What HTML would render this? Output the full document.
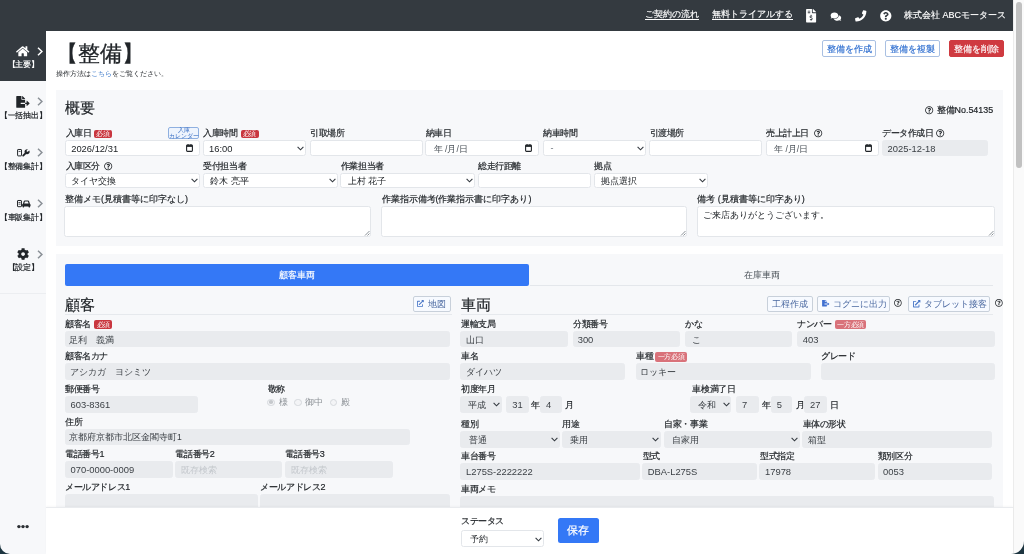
<!DOCTYPE html>
<html><head><meta charset="utf-8">
<style>
*{box-sizing:border-box}
html,body{margin:0;padding:0}
body{-webkit-font-smoothing:antialiased;will-change:transform;width:1024px;height:554px;overflow:hidden;position:relative;background:#fff;font-family:"Liberation Sans",sans-serif;color:#212529}
.a{position:absolute}
svg{overflow:visible}
.hdr{left:0;top:0;width:1013px;height:31px;background:#343a40}
.hl{-webkit-text-stroke:0.15px #fff;color:#fff;font-size:9px;line-height:1;text-decoration:underline;text-underline-offset:1.6px;white-space:nowrap}
.sb{left:0;top:31px;width:46px;height:523px;background:#f7f8fa}
.lb{position:absolute;font-size:8.7px;line-height:1;white-space:nowrap;color:#212529;-webkit-text-stroke:0.18px #212529}
.in{position:absolute;background:#fff;border:1px solid #e3e6ea;border-radius:2.5px;font-size:9px;line-height:1;color:#212529;white-space:nowrap;overflow:hidden}
.ro{background:#e9ebee;border-color:#e9ebee;color:#3a3f44}
.card{background:#f7f8fa}
.badge{position:absolute;background:#c9363f;color:#fff;border-radius:2px;font-size:7px;line-height:1;text-align:center;white-space:nowrap;letter-spacing:-0.3px}
.chev{position:absolute;width:5px;height:5px;border-right:1px solid #495057;border-bottom:1px solid #495057;transform:rotate(45deg)}
.btn{position:absolute;border:1px solid #a9c0e2;border-radius:2px;background:#fff;color:#2f6fd0;-webkit-text-stroke:0.15px currentColor;font-size:8.6px;line-height:1;text-align:center;white-space:nowrap}
</style></head><body>
<!-- header -->
<div class="a hdr"></div>
<div class="a hl" style="left:645px;top:10.2px">ご契約の流れ</div>
<div class="a hl" style="left:712px;top:10.2px">無料トライアルする</div>
<div class="a" style="left:904px;top:11px;color:#fff;-webkit-text-stroke:0.15px #fff;font-size:9px;line-height:1;white-space:nowrap">株式会社 ABCモータース</div>

<!-- sidebar -->
<div class="a sb"></div>
<div class="a" style="left:0;top:31px;width:46px;height:50px;background:#343a40"></div>

<!-- scrollbar -->
<div class="a" style="left:1013px;top:0;width:11px;height:554px;background:#fafafa;border-left:1px solid #ececec"></div>
<div class="a" style="left:1016px;top:2px;width:6px;height:166px;background:#c1c1c1;border-radius:3px"></div>

<!-- title -->
<div class="a" style="left:56px;top:43px;font-size:22px;line-height:1;-webkit-text-stroke:0.3px #212529;white-space:nowrap">【整備】</div>
<div class="a" style="left:56px;top:70px;font-size:7px;line-height:1;white-space:nowrap">操作方法は<span style="color:#3a78c9">こちら</span>をご覧ください。</div>
<div class="btn" style="left:822px;top:40px;width:54px;height:16.5px;padding-top:3.5px">整備を作成</div>
<div class="btn" style="left:885px;top:40px;width:55px;height:16.5px;padding-top:3.5px">整備を複製</div>
<div class="btn" style="left:949px;top:40px;width:54.5px;height:16.5px;padding-top:3.5px;background:#cf3a40;border-color:#cf3a40;color:#fff">整備を削除</div>

<!-- card 1 -->
<div class="a card" style="left:56px;top:89.5px;width:947px;height:156px"></div>
<div class="a" style="left:64.5px;top:100px;font-size:15px;line-height:1;-webkit-text-stroke:0.2px #212529;white-space:nowrap">概要</div>
<div class="a" style="left:936.6px;top:106px;font-size:8.9px;-webkit-text-stroke:0.2px #212529;line-height:1;white-space:nowrap">整備No.54135</div>


<div class="lb" style="left:65.5px;top:128.6px;font-size:9px;letter-spacing:-0.4px;">入庫日</div>
<div class="lb" style="left:203.3px;top:128.6px;font-size:9px;letter-spacing:-0.4px;">入庫時間</div>
<div class="lb" style="left:310.1px;top:128.6px;font-size:9px;letter-spacing:-0.4px;">引取場所</div>
<div class="lb" style="left:425.7px;top:128.6px;font-size:9px;letter-spacing:-0.4px;">納車日</div>
<div class="lb" style="left:543.0px;top:128.6px;font-size:9px;letter-spacing:-0.4px;">納車時間</div>
<div class="lb" style="left:649.5px;top:128.6px;font-size:9px;letter-spacing:-0.4px;">引渡場所</div>
<div class="lb" style="left:766.0px;top:128.6px;font-size:9px;letter-spacing:-0.4px;">売上計上日</div>
<div class="lb" style="left:882.1px;top:128.6px;font-size:9px;letter-spacing:-0.4px;">データ作成日</div>
<div class="badge" style="left:94px;top:129.6px;width:18.40px;height:8.70px;background:#c9363f;padding-top:0.85px">必須</div>
<div class="badge" style="left:240.5px;top:129.6px;width:18.00px;height:8.70px;background:#c9363f;padding-top:0.85px">必須</div>
<div class="a" style="left:168.4px;top:126.5px;width:31px;height:12.9px;border:1px solid #8fb0e0;background:#eef4fd;border-radius:2px"></div>
<div class="a" style="left:168.4px;top:126.6px;width:31px;font-size:6px;line-height:6px;letter-spacing:-0.2px;color:#3a6fc4;text-align:center;white-space:nowrap">入庫<br>カレンダー</div>
<svg class="a" style="left:813.6px;top:128.6px" width="8.4" height="8.4" viewBox="0 0 512 512"><path fill="#212529" d="M256 8C119.043 8 8 119.083 8 256c0 136.997 111.043 248 248 248s248-111.003 248-248C504 119.083 392.957 8 256 8zm0 448c-110.532 0-200-89.431-200-200 0-110.495 89.472-200 200-200 110.491 0 200 89.471 200 200 0 110.53-89.431 200-200 200zm107.244-255.2c0 67.052-72.421 68.084-72.421 92.863V300c0 6.627-5.373 12-12 12h-45.647c-6.627 0-12-5.373-12-12v-8.659c0-35.745 27.1-50.034 47.579-61.516 17.561-9.845 28.324-16.541 28.324-29.579 0-17.246-21.999-28.693-39.784-28.693-23.189 0-33.894 10.977-48.942 29.969-4.057 5.12-11.46 6.071-16.666 2.124l-27.824-21.098c-5.107-3.872-6.251-11.066-2.644-16.363C184.846 131.491 214.94 112 261.794 112c49.071 0 101.45 38.304 101.45 88.8zM298 368c0 23.159-18.841 42-42 42s-42-18.841-42-42 18.841-42 42-42 42 18.841 42 42z"/></svg>
<svg class="a" style="left:935.8px;top:128.6px" width="8.4" height="8.4" viewBox="0 0 512 512"><path fill="#212529" d="M256 8C119.043 8 8 119.083 8 256c0 136.997 111.043 248 248 248s248-111.003 248-248C504 119.083 392.957 8 256 8zm0 448c-110.532 0-200-89.431-200-200 0-110.495 89.472-200 200-200 110.491 0 200 89.471 200 200 0 110.53-89.431 200-200 200zm107.244-255.2c0 67.052-72.421 68.084-72.421 92.863V300c0 6.627-5.373 12-12 12h-45.647c-6.627 0-12-5.373-12-12v-8.659c0-35.745 27.1-50.034 47.579-61.516 17.561-9.845 28.324-16.541 28.324-29.579 0-17.246-21.999-28.693-39.784-28.693-23.189 0-33.894 10.977-48.942 29.969-4.057 5.12-11.46 6.071-16.666 2.124l-27.824-21.098c-5.107-3.872-6.251-11.066-2.644-16.363C184.846 131.491 214.94 112 261.794 112c49.071 0 101.45 38.304 101.45 88.8zM298 368c0 23.159-18.841 42-42 42s-42-18.841-42-42 18.841-42 42-42 42 18.841 42 42z"/></svg>
<svg class="a" style="left:925px;top:106.3px" width="8.4" height="8.4" viewBox="0 0 512 512"><path fill="#212529" d="M256 8C119.043 8 8 119.083 8 256c0 136.997 111.043 248 248 248s248-111.003 248-248C504 119.083 392.957 8 256 8zm0 448c-110.532 0-200-89.431-200-200 0-110.495 89.472-200 200-200 110.491 0 200 89.471 200 200 0 110.53-89.431 200-200 200zm107.244-255.2c0 67.052-72.421 68.084-72.421 92.863V300c0 6.627-5.373 12-12 12h-45.647c-6.627 0-12-5.373-12-12v-8.659c0-35.745 27.1-50.034 47.579-61.516 17.561-9.845 28.324-16.541 28.324-29.579 0-17.246-21.999-28.693-39.784-28.693-23.189 0-33.894 10.977-48.942 29.969-4.057 5.12-11.46 6.071-16.666 2.124l-27.824-21.098c-5.107-3.872-6.251-11.066-2.644-16.363C184.846 131.491 214.94 112 261.794 112c49.071 0 101.45 38.304 101.45 88.8zM298 368c0 23.159-18.841 42-42 42s-42-18.841-42-42 18.841-42 42-42 42 18.841 42 42z"/></svg>
<div class="in" style="left:65px;top:140.2px;width:134.50px;height:16.10px;"><span style="position:absolute;left:5.2px;top:2.45px;font-size:9.4px;">2026/12/31</span></div>
<svg class="a" style="left:186.2px;top:144px" width="7" height="8" viewBox="0 0 7 8"><rect x="0.6" y="1.1" width="5.8" height="6.3" rx="0.8" fill="none" stroke="#212529" stroke-width="1.1"/><rect x="0.6" y="1.1" width="5.8" height="1.8" fill="#212529"/><rect x="1.6" y="0" width="0.9" height="1.5" fill="#212529"/><rect x="4.5" y="0" width="0.9" height="1.5" fill="#212529"/></svg>
<div class="in" style="left:202.8px;top:140.2px;width:103.50px;height:16.10px;"><span style="position:absolute;left:5.2px;top:2.45px;font-size:9.4px;">16:00</span></div>
<svg class="a" style="left:297.3px;top:146.05px" width="7" height="5" viewBox="0 0 7 5"><path d="M0.6 0.8 L3.5 3.8 L6.4 0.8" fill="none" stroke="#343a40" stroke-width="1.1"/></svg>
<div class="in" style="left:309.6px;top:140.2px;width:113.40px;height:16.10px;"><span style="position:absolute;left:5.5px;top:3.25px;font-size:9px;"></span></div>
<div class="in" style="left:425.2px;top:140.2px;width:113.50px;height:16.10px;"><span style="position:absolute;left:7.5px;top:3.45px;font-size:8.6px;color:#495057;">年 /月/日</span></div>
<svg class="a" style="left:524.8px;top:144px" width="7" height="8" viewBox="0 0 7 8"><rect x="0.6" y="1.1" width="5.8" height="6.3" rx="0.8" fill="none" stroke="#212529" stroke-width="1.1"/><rect x="0.6" y="1.1" width="5.8" height="1.8" fill="#212529"/><rect x="1.6" y="0" width="0.9" height="1.5" fill="#212529"/><rect x="4.5" y="0" width="0.9" height="1.5" fill="#212529"/></svg>
<div class="in" style="left:542.5px;top:140.2px;width:103.50px;height:16.10px;"><span style="position:absolute;left:7px;top:3.25px;font-size:9px;color:#6c757d;">-</span></div>
<svg class="a" style="left:637px;top:146.05px" width="7" height="5" viewBox="0 0 7 5"><path d="M0.6 0.8 L3.5 3.8 L6.4 0.8" fill="none" stroke="#343a40" stroke-width="1.1"/></svg>
<div class="in" style="left:649px;top:140.2px;width:113.20px;height:16.10px;"><span style="position:absolute;left:5.5px;top:3.25px;font-size:9px;"></span></div>
<div class="in" style="left:765.5px;top:140.2px;width:113.10px;height:16.10px;"><span style="position:absolute;left:7.5px;top:3.45px;font-size:8.6px;color:#495057;">年 /月/日</span></div>
<svg class="a" style="left:864.6px;top:144px" width="7" height="8" viewBox="0 0 7 8"><rect x="0.6" y="1.1" width="5.8" height="6.3" rx="0.8" fill="none" stroke="#212529" stroke-width="1.1"/><rect x="0.6" y="1.1" width="5.8" height="1.8" fill="#212529"/><rect x="1.6" y="0" width="0.9" height="1.5" fill="#212529"/><rect x="4.5" y="0" width="0.9" height="1.5" fill="#212529"/></svg>
<div class="in ro" style="left:881.6px;top:140.2px;width:106.10px;height:16.10px;"><span style="position:absolute;left:5px;top:2.45px;font-size:9.4px;">2025-12-18</span></div>
<div class="lb" style="left:65.5px;top:162.2px;font-size:9px;letter-spacing:-0.4px;">入庫区分</div>
<div class="lb" style="left:203.3px;top:162.2px;font-size:9px;letter-spacing:-0.4px;">受付担当者</div>
<div class="lb" style="left:340.9px;top:162.2px;font-size:9px;letter-spacing:-0.4px;">作業担当者</div>
<div class="lb" style="left:478.1px;top:162.2px;font-size:9px;letter-spacing:-0.4px;">総走行距離</div>
<div class="lb" style="left:594.3px;top:162.2px;font-size:9px;letter-spacing:-0.4px;">拠点</div>
<svg class="a" style="left:104px;top:162.2px" width="8.4" height="8.4" viewBox="0 0 512 512"><path fill="#212529" d="M256 8C119.043 8 8 119.083 8 256c0 136.997 111.043 248 248 248s248-111.003 248-248C504 119.083 392.957 8 256 8zm0 448c-110.532 0-200-89.431-200-200 0-110.495 89.472-200 200-200 110.491 0 200 89.471 200 200 0 110.53-89.431 200-200 200zm107.244-255.2c0 67.052-72.421 68.084-72.421 92.863V300c0 6.627-5.373 12-12 12h-45.647c-6.627 0-12-5.373-12-12v-8.659c0-35.745 27.1-50.034 47.579-61.516 17.561-9.845 28.324-16.541 28.324-29.579 0-17.246-21.999-28.693-39.784-28.693-23.189 0-33.894 10.977-48.942 29.969-4.057 5.12-11.46 6.071-16.666 2.124l-27.824-21.098c-5.107-3.872-6.251-11.066-2.644-16.363C184.846 131.491 214.94 112 261.794 112c49.071 0 101.45 38.304 101.45 88.8zM298 368c0 23.159-18.841 42-42 42s-42-18.841-42-42 18.841-42 42-42 42 18.841 42 42z"/></svg>
<div class="in" style="left:65px;top:172.7px;width:134.50px;height:15.40px;"><span style="position:absolute;left:5px;top:3.10px;font-size:8.6px;">タイヤ交換</span></div>
<svg class="a" style="left:190.5px;top:178.2px" width="7" height="5" viewBox="0 0 7 5"><path d="M0.6 0.8 L3.5 3.8 L6.4 0.8" fill="none" stroke="#343a40" stroke-width="1.1"/></svg>
<div class="in" style="left:202.8px;top:172.7px;width:134.80px;height:15.40px;"><span style="position:absolute;left:6.5px;top:3.10px;font-size:8.6px;">鈴木 亮平</span></div>
<svg class="a" style="left:328.6px;top:178.2px" width="7" height="5" viewBox="0 0 7 5"><path d="M0.6 0.8 L3.5 3.8 L6.4 0.8" fill="none" stroke="#343a40" stroke-width="1.1"/></svg>
<div class="in" style="left:340.4px;top:172.7px;width:134.80px;height:15.40px;"><span style="position:absolute;left:6.5px;top:3.10px;font-size:8.6px;">上村 花子</span></div>
<svg class="a" style="left:466.2px;top:178.2px" width="7" height="5" viewBox="0 0 7 5"><path d="M0.6 0.8 L3.5 3.8 L6.4 0.8" fill="none" stroke="#343a40" stroke-width="1.1"/></svg>
<div class="in" style="left:477.6px;top:172.7px;width:113.70px;height:15.40px;"><span style="position:absolute;left:5.5px;top:2.90px;font-size:9px;"></span></div>
<div class="in" style="left:593.8px;top:172.7px;width:113.80px;height:15.40px;"><span style="position:absolute;left:6.5px;top:3.10px;font-size:8.6px;">拠点選択</span></div>
<svg class="a" style="left:698.6px;top:178.2px" width="7" height="5" viewBox="0 0 7 5"><path d="M0.6 0.8 L3.5 3.8 L6.4 0.8" fill="none" stroke="#343a40" stroke-width="1.1"/></svg>
<div class="lb" style="left:65px;top:194.6px;font-size:9px;">整備メモ(見積書等に印字なし)</div>
<div class="lb" style="left:381.5px;top:194.6px;font-size:9px;">作業指示備考(作業指示書に印字あり)</div>
<div class="lb" style="left:697.2px;top:194.6px;font-size:9px;">備考 (見積書等に印字あり)</div>
<div class="in" style="left:64px;top:206px;width:307.20px;height:30.60px"></div>
<svg class="a" style="left:364.2px;top:229.6px" width="6" height="6" viewBox="0 0 6 6"><path d="M5.5 1 L1 5.5 M5.5 3.5 L3.5 5.5" stroke="#6c757d" stroke-width="0.8"/></svg>
<div class="in" style="left:381.3px;top:206px;width:306.10px;height:30.60px"></div>
<svg class="a" style="left:680.4px;top:229.6px" width="6" height="6" viewBox="0 0 6 6"><path d="M5.5 1 L1 5.5 M5.5 3.5 L3.5 5.5" stroke="#6c757d" stroke-width="0.8"/></svg>
<div class="in" style="left:697px;top:206px;width:297.70px;height:30.60px"></div>
<svg class="a" style="left:987.7px;top:229.6px" width="6" height="6" viewBox="0 0 6 6"><path d="M5.5 1 L1 5.5 M5.5 3.5 L3.5 5.5" stroke="#6c757d" stroke-width="0.8"/></svg>
<div class="a" style="left:703px;top:210.5px;font-size:8.6px;line-height:1;white-space:nowrap">ご来店ありがとうございます。</div>
<svg class="a" style="left:806px;top:9.4px" width="10.2" height="13.4" viewBox="0 0 384 512"><path fill="#fff" d="M377 105L279.1 7c-4.5-4.5-10.6-7-17-7H256v128h128v-6.1c0-6.3-2.5-12.4-7-16.9zM224 136V0H24C10.7 0 0 10.7 0 24v464c0 13.3 10.7 24 24 24h336c13.3 0 24-10.7 24-24V160H248c-13.2 0-24-10.8-24-24zM64 72c0-4.4 3.6-8 8-8h80c4.4 0 8 3.6 8 8v16c0 4.4-3.6 8-8 8H72c-4.4 0-8-3.6-8-8V72zm0 80v-16c0-4.4 3.6-8 8-8h80c4.4 0 8 3.6 8 8v16c0 4.4-3.6 8-8 8H72c-4.4 0-8-3.6-8-8zm144 263.9V440c0 4.4-3.6 8-8 8h-16c-4.4 0-8-3.6-8-8v-24.3c-11.3-.6-22.3-4.5-31.4-11.4-3.9-2.9-4.1-8.8-.6-12.1l11.8-11.2c2.8-2.6 6.9-2.8 10.1-.8 3.9 2.4 8.3 3.7 12.8 3.7h28.1c6.5 0 11.8-5.9 11.8-13.2 0-6-3.6-11.2-8.8-12.7l-45-13.5c-18.6-5.6-31.6-23.4-31.6-43.4 0-24.5 19.1-44.4 42.7-45.1V232c0-4.4 3.6-8 8-8h16c4.4 0 8 3.6 8 8v24.3c11.3.6 22.3 4.5 31.4 11.4 3.9 2.9 4.1 8.8.6 12.1l-11.8 11.2c-2.8 2.6-6.9 2.8-10.1.8-3.9-2.4-8.3-3.7-12.8-3.7h-28.1c-6.5 0-11.8 5.9-11.8 13.2 0 6 3.6 11.2 8.8 12.7l45 13.5c18.6 5.6 31.6 23.4 31.6 43.4 0 24.6-19.1 44.5-42.7 45.1z"/></svg>
<svg class="a" style="left:829.6px;top:11.6px" width="11.8" height="9.4" viewBox="0 0 576 512"><path fill="#fff" d="M416 192c0-88.4-93.1-160-208-160S0 103.6 0 192c0 34.3 14.1 65.9 38 92-13.4 30.2-35.5 54.2-35.8 54.5-2.2 2.3-2.8 5.7-1.5 8.7S4.8 352 8 352c36.6 0 66.9-12.3 88.7-25 32.2 15.7 70.3 25 111.3 25 114.9 0 208-71.6 208-160zm122 220c23.9-26 38-57.7 38-92 0-66.9-53.5-124.2-129.3-148.1.9 6.6 1.3 13.3 1.3 20.1 0 105.9-107.7 192-240 192-10.8 0-21.3-.8-31.7-1.9C207.8 439.6 281.8 480 368 480c41 0 79.1-9.2 111.3-25 21.8 12.7 52.1 25 88.7 25 3.2 0 6.1-1.9 7.3-4.8 1.3-2.9.7-6.3-1.5-8.7-.3-.3-22.4-24.2-35.8-54.5z"/></svg>
<svg class="a" style="left:854.8px;top:10.3px" width="11.4" height="11.8" viewBox="0 0 512 512"><path fill="#fff" transform="translate(512 0) scale(-1 1)" d="M497.39 361.8l-112-48a24 24 0 0 0-28 6.9l-49.6 60.6A370.66 370.66 0 0 1 130.6 204.11l60.6-49.6a23.94 23.94 0 0 0 6.9-28l-48-112A24.16 24.16 0 0 0 122.6.61l-104 24A24 24 0 0 0 0 48c0 256.5 207.9 464 464 464a24 24 0 0 0 23.4-18.6l24-104a24.29 24.29 0 0 0-14.01-27.6z"/></svg>
<svg class="a" style="left:879.6px;top:10.3px" width="11.6" height="11.6" viewBox="0 0 512 512"><path fill="#fff" d="M504 256c0 136.997-111.043 248-248 248S8 392.997 8 256C8 119.083 119.043 8 256 8s248 111.083 248 248zM262.655 90c-54.497 0-89.255 22.957-116.549 63.758-3.536 5.286-2.353 12.415 2.715 16.258l34.699 26.31c5.205 3.947 12.621 3.008 16.665-2.122 17.864-22.658 30.113-35.797 57.303-35.797 20.429 0 45.698 13.148 45.698 32.958 0 14.976-12.363 22.667-32.534 33.976C247.128 238.528 216 254.941 216 296v4c0 6.627 5.373 12 12 12h56c6.627 0 12-5.373 12-12v-1.333c0-28.462 83.186-29.647 83.186-106.667 0-58.002-60.165-102-116.531-102zM256 338c-25.365 0-46 20.635-46 46 0 25.364 20.635 46 46 46s46-20.636 46-46c0-25.365-20.635-46-46-46z"/></svg>
<svg class="a" style="left:16.3px;top:45.8px" width="13.4" height="10.4" viewBox="0 0 576 448"><path fill="#fff" d="M280.37 116.7L100 265.2V428a16 16 0 0 0 16 16l108.12-.28a16 16 0 0 0 15.92-16V333a16 16 0 0 1 16-16h64a16 16 0 0 1 16 16v94.65a16 16 0 0 0 16 16.05L464 444a16 16 0 0 0 16-16V265.1L299.67 116.7a12.19 12.19 0 0 0-19.3 0zM571.6 233.6L488 164.7V26a12 12 0 0 0-12-12h-56a12 12 0 0 0-12 12v72.6L318.47 24.7a48 48 0 0 0-61 0L4.34 233.6a12 12 0 0 0-1.6 16.9l25.5 31A12 12 0 0 0 45.15 283L280.37 89.3a12.19 12.19 0 0 1 15.3 0L530.9 283a12 12 0 0 0 16.9-1.6l25.5-31a12 12 0 0 0-1.7-16.8z"/></svg>
<svg class="a" style="left:37px;top:46.8px" width="6" height="9" viewBox="0 0 6 9"><path d="M1 0.8 L4.9 4.5 L1 8.2" fill="none" stroke="#fff" stroke-width="1.5"/></svg>
<div class="a" style="left:0;width:46px;top:61px;text-align:center;font-size:7.7px;letter-spacing:-0.3px;line-height:1;white-space:nowrap;color:#fff;-webkit-text-stroke:0.2px #fff">【主要】</div>
<svg class="a" style="left:16.2px;top:95.8px" width="13.8" height="11.8" viewBox="0 0 576 512"><path fill="#212529" d="M384 121.9c0-6.3-2.5-12.4-7-16.9L279.1 7c-4.5-4.5-10.6-7-17-7H256v128h128zM571 308l-95.7-96.4c-10.1-10.1-27.4-3-27.4 11.3V288h-64v64h64v65.2c0 14.3 17.3 21.4 27.4 11.3L571 332c6.6-6.6 6.6-17.4 0-24zm-379 28v-32c0-8.8 7.2-16 16-16h176V160H248c-13.2 0-24-10.8-24-24V0H24C10.7 0 0 10.7 0 24v464c0 13.3 10.7 24 24 24h336c13.3 0 24-10.7 24-24V352H208c-8.8 0-16-7.2-16-16z"/></svg>
<svg class="a" style="left:37px;top:97.3px" width="6" height="9" viewBox="0 0 6 9"><path d="M1 0.8 L4.9 4.5 L1 8.2" fill="none" stroke="#8a9096" stroke-width="1.5"/></svg>
<div class="a" style="left:0;width:46px;top:112px;text-align:center;font-size:7.7px;letter-spacing:-0.3px;line-height:1;white-space:nowrap;color:#212529;-webkit-text-stroke:0.2px #212529">【一括抽出】</div>
<svg class="a" style="left:16.6px;top:148.8px" width="13" height="7.4" viewBox="0 0 26 15"><rect x="1" y="1" width="8" height="13" rx="1" fill="none" stroke="#212529" stroke-width="2"/><rect x="3" y="4" width="4" height="1.6" fill="#212529"/><path fill="#212529" d="M24.5 3.2l-2.6 2.6-2.2-.4-.4-2.2 2.6-2.6c-1.8-.6-3.9-.2-5.3 1.2-1.5 1.5-1.9 3.7-1.1 5.6L11 12c-.8.8-.8 2 0 2.8.8.8 2 .8 2.8 0l4.6-4.5c1.9.8 4.1.4 5.6-1.1 1.4-1.4 1.8-3.5 1.2-5.3z"/></svg>
<svg class="a" style="left:37px;top:148.4px" width="6" height="9" viewBox="0 0 6 9"><path d="M1 0.8 L4.9 4.5 L1 8.2" fill="none" stroke="#8a9096" stroke-width="1.5"/></svg>
<div class="a" style="left:0;width:46px;top:163px;text-align:center;font-size:7.7px;letter-spacing:-0.3px;line-height:1;white-space:nowrap;color:#212529;-webkit-text-stroke:0.2px #212529">【整備集計】</div>
<svg class="a" style="left:16.6px;top:199.6px" width="13.4" height="7.2" viewBox="0 0 27 14.5"><rect x="1" y="1" width="8" height="12.5" rx="1" fill="none" stroke="#212529" stroke-width="2"/><rect x="3" y="4" width="4" height="1.6" fill="#212529"/><rect x="3" y="7.5" width="4" height="1.6" fill="#212529"/><path fill="#212529" d="M12 7.5l1.6-5c.3-.9 1.1-1.5 2-1.5h6.8c.9 0 1.7.6 2 1.5l1.6 5c.8.3 1.3 1.1 1.3 2v2.5c0 .6-.4 1-1 1v1c0 .6-.4 1-1 1h-1c-.6 0-1-.4-1-1v-1h-9v1c0 .6-.4 1-1 1h-1c-.6 0-1-.4-1-1v-1c-.6 0-1-.4-1-1V9.5c0-.9.5-1.7 1.3-2zm2.6-.3h8.8l-1.2-3.8c-.1-.3-.3-.4-.6-.4h-5.2c-.3 0-.5.1-.6.4z"/></svg>
<svg class="a" style="left:37px;top:198.8px" width="6" height="9" viewBox="0 0 6 9"><path d="M1 0.8 L4.9 4.5 L1 8.2" fill="none" stroke="#8a9096" stroke-width="1.5"/></svg>
<div class="a" style="left:0;width:46px;top:213.5px;text-align:center;font-size:7.7px;letter-spacing:-0.3px;line-height:1;white-space:nowrap;color:#212529;-webkit-text-stroke:0.2px #212529">【車販集計】</div>
<svg class="a" style="left:17px;top:247.8px" width="12.2" height="12.2" viewBox="0 0 512 512"><path fill="#212529" d="M487.4 315.7l-42.6-24.6c4.3-23.2 4.3-47 0-70.2l42.6-24.6c4.9-2.8 7.1-8.6 5.5-14-11.1-35.6-30-67.8-54.7-94.6-3.8-4.1-10-5.1-14.8-2.3L380.8 110c-17.9-15.4-38.5-27.3-60.8-35.1V25.8c0-5.6-3.9-10.5-9.4-11.7-36.7-8.2-74.3-7.8-109.2 0-5.5 1.2-9.4 6.1-9.4 11.7V75c-22.2 7.9-42.8 19.8-60.8 35.1L88.7 85.5c-4.9-2.8-11-1.9-14.8 2.3-24.7 26.7-43.6 58.9-54.7 94.6-1.7 5.4.6 11.2 5.5 14L67.3 221c-4.3 23.2-4.3 47 0 70.2l-42.6 24.6c-4.9 2.8-7.1 8.6-5.5 14 11.1 35.6 30 67.8 54.7 94.6 3.8 4.1 10 5.1 14.8 2.3l42.6-24.6c17.9 15.4 38.5 27.3 60.8 35.1v49.2c0 5.6 3.9 10.5 9.4 11.7 36.7 8.2 74.3 7.8 109.2 0 5.5-1.2 9.4-6.1 9.4-11.7v-49.2c22.2-7.9 42.8-19.8 60.8-35.1l42.6 24.6c4.9 2.8 11 1.9 14.8-2.3 24.7-26.7 43.6-58.9 54.7-94.6 1.5-5.5-.7-11.3-5.6-14.1zM256 336c-44.1 0-80-35.9-80-80s35.9-80 80-80 80 35.9 80 80-35.9 80-80 80z"/></svg>
<svg class="a" style="left:37px;top:250.2px" width="6" height="9" viewBox="0 0 6 9"><path d="M1 0.8 L4.9 4.5 L1 8.2" fill="none" stroke="#8a9096" stroke-width="1.5"/></svg>
<div class="a" style="left:0;width:46px;top:264.3px;text-align:center;font-size:7.7px;letter-spacing:-0.3px;line-height:1;white-space:nowrap;color:#212529;-webkit-text-stroke:0.2px #212529">【設定】</div>
<div class="a" style="left:0;top:293px;width:46px;height:1px;background:#eceef1"></div>
<svg class="a" style="left:16px;top:523px" width="14" height="7" viewBox="0 0 14 7"><circle cx="2.9" cy="3.6" r="1.7" fill="#2b2f33"/><circle cx="7" cy="3.6" r="1.7" fill="#2b2f33"/><circle cx="11.1" cy="3.6" r="1.7" fill="#2b2f33"/></svg>
<div class="a card" style="left:56px;top:254.4px;width:947px;height:300px"></div>
<div class="a" style="left:65px;top:264.2px;width:464.4px;height:21.9px;background:#3478f6;border-radius:2px"></div>
<div class="a" style="left:65px;top:270.6px;width:464.4px;text-align:center;font-size:8.6px;line-height:1;color:#fff;white-space:nowrap;-webkit-text-stroke:0.15px #fff">顧客車両</div>
<div class="a" style="left:530px;top:285.4px;width:463px;height:1px;background:#e4e7eb"></div>
<div class="a" style="left:530px;top:271.4px;width:463px;text-align:center;font-size:8.6px;line-height:1;color:#495057;white-space:nowrap">在庫車両</div>
<div class="a" style="left:64.5px;top:297px;font-size:15px;line-height:1;white-space:nowrap;-webkit-text-stroke:0.2px #212529">顧客</div>
<div class="a" style="left:460.8px;top:297px;font-size:15px;line-height:1;white-space:nowrap;-webkit-text-stroke:0.2px #212529">車両</div>
<div class="a" style="left:65px;top:314px;width:387px;height:1px;background:#e6e9ed"></div>
<div class="a" style="left:461px;top:314px;width:532px;height:1px;background:#e6e9ed"></div>
<div class="a" style="left:412.8px;top:295.8px;width:37.80px;height:16.30px;border:1px solid #c8d0da;border-radius:2px;background:#f7faff"></div>
<div class="a" style="left:428.2px;top:299.60px;font-size:8.7px;line-height:1;color:#4a68a0;white-space:nowrap">地図</div>
<svg class="a" style="left:417.1px;top:299.8px" width="6.8" height="6.8" viewBox="0 0 512 512"><path fill="#4a78c8" d="M432 320h-32a16 16 0 0 0-16 16v112H64V128h144a16 16 0 0 0 16-16V80a16 16 0 0 0-16-16H48a48 48 0 0 0-48 48v352a48 48 0 0 0 48 48h352a48 48 0 0 0 48-48V336a16 16 0 0 0-16-16zM488 0H360c-21.37 0-32.05 25.91-17 41l35.73 35.73L135 320.37a24 24 0 0 0 0 34L157.67 377a24 24 0 0 0 34 0l243.61-243.68L471 169c15 15 41 4.5 41-17V24a24 24 0 0 0-24-24z"/></svg>
<div class="a" style="left:767px;top:295.8px;width:45.60px;height:16.30px;border:1px solid #c8d0da;border-radius:2px;background:#f7faff"></div>
<div class="a" style="left:772.2px;top:299.60px;font-size:8.7px;line-height:1;color:#4a68a0;white-space:nowrap">工程作成</div>
<div class="a" style="left:817.3px;top:295.8px;width:72.30px;height:16.30px;border:1px solid #c8d0da;border-radius:2px;background:#f7faff"></div>
<div class="a" style="left:833px;top:299.60px;font-size:8.7px;line-height:1;color:#4a68a0;white-space:nowrap">コグニに出力</div>
<svg class="a" style="left:821.5px;top:299.6px" width="7.4" height="6.4" viewBox="0 0 576 512"><path fill="#3f6fd0" d="M384 121.9c0-6.3-2.5-12.4-7-16.9L279.1 7c-4.5-4.5-10.6-7-17-7H256v128h128zM571 308l-95.7-96.4c-10.1-10.1-27.4-3-27.4 11.3V288h-64v64h64v65.2c0 14.3 17.3 21.4 27.4 11.3L571 332c6.6-6.6 6.6-17.4 0-24zm-379 28v-32c0-8.8 7.2-16 16-16h176V160H248c-13.2 0-24-10.8-24-24V0H24C10.7 0 0 10.7 0 24v464c0 13.3 10.7 24 24 24h336c13.3 0 24-10.7 24-24V352H208c-8.8 0-16-7.2-16-16z"/></svg>
<svg class="a" style="left:894px;top:299.4px" width="7.8" height="7.8" viewBox="0 0 512 512"><path fill="#212529" d="M256 8C119.043 8 8 119.083 8 256c0 136.997 111.043 248 248 248s248-111.003 248-248C504 119.083 392.957 8 256 8zm0 448c-110.532 0-200-89.431-200-200 0-110.495 89.472-200 200-200 110.491 0 200 89.471 200 200 0 110.53-89.431 200-200 200zm107.244-255.2c0 67.052-72.421 68.084-72.421 92.863V300c0 6.627-5.373 12-12 12h-45.647c-6.627 0-12-5.373-12-12v-8.659c0-35.745 27.1-50.034 47.579-61.516 17.561-9.845 28.324-16.541 28.324-29.579 0-17.246-21.999-28.693-39.784-28.693-23.189 0-33.894 10.977-48.942 29.969-4.057 5.12-11.46 6.071-16.666 2.124l-27.824-21.098c-5.107-3.872-6.251-11.066-2.644-16.363C184.846 131.491 214.94 112 261.794 112c49.071 0 101.45 38.304 101.45 88.8zM298 368c0 23.159-18.841 42-42 42s-42-18.841-42-42 18.841-42 42-42 42 18.841 42 42z"/></svg>
<div class="a" style="left:908.2px;top:295.8px;width:82.30px;height:16.30px;border:1px solid #c8d0da;border-radius:2px;background:#f7faff"></div>
<div class="a" style="left:924px;top:299.60px;font-size:8.7px;line-height:1;color:#4a68a0;white-space:nowrap">タブレット接客</div>
<svg class="a" style="left:912.9px;top:299.8px" width="7.4" height="7.4" viewBox="0 0 512 512"><path fill="#4a78c8" d="M432 320h-32a16 16 0 0 0-16 16v112H64V128h144a16 16 0 0 0 16-16V80a16 16 0 0 0-16-16H48a48 48 0 0 0-48 48v352a48 48 0 0 0 48 48h352a48 48 0 0 0 48-48V336a16 16 0 0 0-16-16zM488 0H360c-21.37 0-32.05 25.91-17 41l35.73 35.73L135 320.37a24 24 0 0 0 0 34L157.67 377a24 24 0 0 0 34 0l243.61-243.68L471 169c15 15 41 4.5 41-17V24a24 24 0 0 0-24-24z"/></svg>
<svg class="a" style="left:994.5px;top:299.4px" width="7.8" height="7.8" viewBox="0 0 512 512"><path fill="#212529" d="M256 8C119.043 8 8 119.083 8 256c0 136.997 111.043 248 248 248s248-111.003 248-248C504 119.083 392.957 8 256 8zm0 448c-110.532 0-200-89.431-200-200 0-110.495 89.472-200 200-200 110.491 0 200 89.471 200 200 0 110.53-89.431 200-200 200zm107.244-255.2c0 67.052-72.421 68.084-72.421 92.863V300c0 6.627-5.373 12-12 12h-45.647c-6.627 0-12-5.373-12-12v-8.659c0-35.745 27.1-50.034 47.579-61.516 17.561-9.845 28.324-16.541 28.324-29.579 0-17.246-21.999-28.693-39.784-28.693-23.189 0-33.894 10.977-48.942 29.969-4.057 5.12-11.46 6.071-16.666 2.124l-27.824-21.098c-5.107-3.872-6.251-11.066-2.644-16.363C184.846 131.491 214.94 112 261.794 112c49.071 0 101.45 38.304 101.45 88.8zM298 368c0 23.159-18.841 42-42 42s-42-18.841-42-42 18.841-42 42-42 42 18.841 42 42z"/></svg>
<div class="lb" style="left:65px;top:319.8px;font-size:9px;letter-spacing:-0.4px;">顧客名</div>
<div class="badge" style="left:94.1px;top:320.3px;width:18.30px;height:9.00px;background:#c9363f;padding-top:1.00px">必須</div>
<div class="in ro" style="left:64.5px;top:330.9px;width:385.80px;height:16.60px;"><span style="position:absolute;left:3.6px;top:3.70px;font-size:8.6px;">足利　義満</span></div>
<div class="lb" style="left:65px;top:352.0px;font-size:9px;letter-spacing:-0.4px;">顧客名カナ</div>
<div class="in ro" style="left:64.5px;top:363.3px;width:385.80px;height:16.40px;"><span style="position:absolute;left:4px;top:3.60px;font-size:8.6px;">アシカガ　ヨシミツ</span></div>
<div class="lb" style="left:65px;top:384.6px;font-size:9px;letter-spacing:-0.4px;">郵便番号</div>
<div class="in ro" style="left:64.5px;top:395.6px;width:133.10px;height:17.10px;"><span style="position:absolute;left:5px;top:2.95px;font-size:9.4px;">603-8361</span></div>
<div class="lb" style="left:267.5px;top:384.6px;font-size:9px;letter-spacing:-0.4px;">敬称</div>
<div class="a" style="left:267.3px;top:398.6px;width:7.4px;height:7.4px;border-radius:50%;border:1px solid #d5d8dc;background:#f3f4f6"></div>
<div class="a" style="left:278.5px;top:398px;font-size:8.6px;line-height:1;color:#8d9297;white-space:nowrap">様</div>
<div class="a" style="left:294.3px;top:398.6px;width:7.4px;height:7.4px;border-radius:50%;border:1px solid #d5d8dc;background:#f3f4f6"></div>
<div class="a" style="left:305.2px;top:398px;font-size:8.6px;line-height:1;color:#8d9297;white-space:nowrap">御中</div>
<div class="a" style="left:329.7px;top:398.6px;width:7.4px;height:7.4px;border-radius:50%;border:1px solid #d5d8dc;background:#f3f4f6"></div>
<div class="a" style="left:341px;top:398px;font-size:8.6px;line-height:1;color:#8d9297;white-space:nowrap">殿</div>
<div class="a" style="left:269.2px;top:400.4px;width:3.6px;height:3.6px;border-radius:50%;background:#c6c9cd"></div>
<div class="lb" style="left:65px;top:417.6px;font-size:9px;letter-spacing:-0.4px;">住所</div>
<div class="in ro" style="left:64.5px;top:428.7px;width:345.00px;height:16.60px;"><span style="position:absolute;left:3.5px;top:3.70px;font-size:8.6px;">京都府京都市北区金閣寺町1</span></div>
<div class="lb" style="left:65px;top:450.2px;font-size:9px;letter-spacing:-0.4px;">電話番号1</div>
<div class="lb" style="left:175.4px;top:450.2px;font-size:9px;letter-spacing:-0.4px;">電話番号2</div>
<div class="lb" style="left:285.4px;top:450.2px;font-size:9px;letter-spacing:-0.4px;">電話番号3</div>
<div class="in ro" style="left:64.5px;top:461.1px;width:108.20px;height:16.60px;"><span style="position:absolute;left:5px;top:2.70px;font-size:9.4px;">070-0000-0009</span></div>
<div class="in ro" style="left:175.1px;top:461.1px;width:106.70px;height:16.60px;"><span style="position:absolute;left:5px;top:3.70px;font-size:8.6px;color:#c3c7cc;">既存検索</span></div>
<div class="in ro" style="left:285px;top:461.1px;width:108.00px;height:16.60px;"><span style="position:absolute;left:5px;top:3.70px;font-size:8.6px;color:#c3c7cc;">既存検索</span></div>
<div class="lb" style="left:65px;top:483.1px;font-size:9px;letter-spacing:-0.4px;">メールアドレス1</div>
<div class="lb" style="left:260.3px;top:483.1px;font-size:9px;letter-spacing:-0.4px;">メールアドレス2</div>
<div class="in ro" style="left:64.5px;top:494px;width:193.60px;height:18.00px;"><span style="position:absolute;left:5.5px;top:4.20px;font-size:9px;"></span></div>
<div class="in ro" style="left:260.3px;top:494px;width:190.10px;height:18.00px;"><span style="position:absolute;left:5.5px;top:4.20px;font-size:9px;"></span></div>
<div class="lb" style="left:461px;top:319.8px;font-size:9px;letter-spacing:-0.4px;">運輸支局</div>
<div class="lb" style="left:573.2px;top:319.8px;font-size:9px;letter-spacing:-0.4px;">分類番号</div>
<div class="lb" style="left:685px;top:319.8px;font-size:9px;letter-spacing:-0.4px;">かな</div>
<div class="lb" style="left:797.3px;top:319.8px;font-size:9px;letter-spacing:-0.4px;">ナンバー</div>
<div class="badge" style="left:835px;top:320.4px;width:31.20px;height:9.00px;background:#d9727a;padding-top:1.00px">一方必須</div>
<div class="in ro" style="left:460px;top:330.9px;width:107.80px;height:16.60px;"><span style="position:absolute;left:5px;top:3.70px;font-size:8.6px;">山口</span></div>
<div class="in ro" style="left:572.7px;top:330.9px;width:107.40px;height:16.60px;"><span style="position:absolute;left:4px;top:2.70px;font-size:9.4px;">300</span></div>
<div class="in ro" style="left:684.7px;top:330.9px;width:107.80px;height:16.60px;"><span style="position:absolute;left:6px;top:3.70px;font-size:8.6px;">こ</span></div>
<div class="in ro" style="left:796.8px;top:330.9px;width:197.90px;height:16.60px;"><span style="position:absolute;left:5px;top:2.70px;font-size:9.4px;">403</span></div>
<div class="lb" style="left:461px;top:352.0px;font-size:9px;letter-spacing:-0.4px;">車名</div>
<div class="lb" style="left:636px;top:352.0px;font-size:9px;letter-spacing:-0.4px;">車種</div>
<div class="lb" style="left:821px;top:352.0px;font-size:9px;letter-spacing:-0.4px;">グレード</div>
<div class="badge" style="left:655.2px;top:352.2px;width:32.00px;height:9.50px;background:#d9727a;padding-top:1.25px">一方必須</div>
<div class="in ro" style="left:460px;top:363.3px;width:165.40px;height:16.40px;"><span style="position:absolute;left:5px;top:3.60px;font-size:8.6px;">ダイハツ</span></div>
<div class="in ro" style="left:635.5px;top:363.3px;width:175.00px;height:16.40px;"><span style="position:absolute;left:3.8px;top:3.60px;font-size:8.6px;">ロッキー</span></div>
<div class="in ro" style="left:820.5px;top:363.3px;width:174.20px;height:16.40px;"><span style="position:absolute;left:5.5px;top:3.40px;font-size:9px;"></span></div>
<div class="lb" style="left:461px;top:384.6px;font-size:9px;letter-spacing:-0.4px;">初度年月</div>
<div class="lb" style="left:692.4px;top:384.6px;font-size:9px;letter-spacing:-0.4px;">車検満了日</div>
<div class="in ro" style="left:460px;top:395.6px;width:41.90px;height:17.10px;"><span style="position:absolute;left:6.5px;top:3.95px;font-size:8.6px;">平成</span></div>
<svg class="a" style="left:492.9px;top:401.95px" width="7" height="5" viewBox="0 0 7 5"><path d="M0.6 0.8 L3.5 3.8 L6.4 0.8" fill="none" stroke="#343a40" stroke-width="1.1"/></svg>
<div class="in ro" style="left:506.3px;top:395.6px;width:22.40px;height:17.10px;"><span style="position:absolute;left:5px;top:2.95px;font-size:9.4px;">31</span></div>
<div class="lb" style="left:531.2px;top:400.8px;font-size:8.6px;letter-spacing:-0.4px;">年</div>
<div class="in ro" style="left:540px;top:395.6px;width:22.00px;height:17.10px;"><span style="position:absolute;left:5px;top:2.95px;font-size:9.4px;">4</span></div>
<div class="lb" style="left:565px;top:400.8px;font-size:8.6px;letter-spacing:-0.4px;">月</div>
<div class="in ro" style="left:690.4px;top:395.6px;width:41.10px;height:17.10px;"><span style="position:absolute;left:6.5px;top:3.95px;font-size:8.6px;">令和</span></div>
<svg class="a" style="left:722.5px;top:401.95px" width="7" height="5" viewBox="0 0 7 5"><path d="M0.6 0.8 L3.5 3.8 L6.4 0.8" fill="none" stroke="#343a40" stroke-width="1.1"/></svg>
<div class="in ro" style="left:736.1px;top:395.6px;width:22.80px;height:17.10px;"><span style="position:absolute;left:5px;top:2.95px;font-size:9.4px;">7</span></div>
<div class="lb" style="left:761.5px;top:400.8px;font-size:8.6px;letter-spacing:-0.4px;">年</div>
<div class="in ro" style="left:770.7px;top:395.6px;width:21.80px;height:17.10px;"><span style="position:absolute;left:5px;top:2.95px;font-size:9.4px;">5</span></div>
<div class="lb" style="left:795.8px;top:400.8px;font-size:8.6px;letter-spacing:-0.4px;">月</div>
<div class="in ro" style="left:804px;top:395.6px;width:22.80px;height:17.10px;"><span style="position:absolute;left:5px;top:2.95px;font-size:9.4px;">27</span></div>
<div class="lb" style="left:830px;top:400.8px;font-size:8.6px;letter-spacing:-0.4px;">日</div>
<div class="lb" style="left:461px;top:420.3px;font-size:9px;letter-spacing:-0.4px;">種別</div>
<div class="lb" style="left:562px;top:420.3px;font-size:9px;letter-spacing:-0.4px;">用途</div>
<div class="lb" style="left:664.2px;top:420.3px;font-size:9px;letter-spacing:-0.4px;">自家・事業</div>
<div class="lb" style="left:802.6px;top:420.3px;font-size:9px;letter-spacing:-0.4px;">車体の形状</div>
<div class="in ro" style="left:460px;top:430.5px;width:99.50px;height:17.20px;"><span style="position:absolute;left:7.5px;top:4.00px;font-size:8.6px;">普通</span></div>
<svg class="a" style="left:550.5px;top:436.90000000000003px" width="7" height="5" viewBox="0 0 7 5"><path d="M0.6 0.8 L3.5 3.8 L6.4 0.8" fill="none" stroke="#343a40" stroke-width="1.1"/></svg>
<div class="in ro" style="left:561.6px;top:430.5px;width:99.00px;height:17.20px;"><span style="position:absolute;left:7.5px;top:4.00px;font-size:8.6px;">乗用</span></div>
<svg class="a" style="left:651.6px;top:436.90000000000003px" width="7" height="5" viewBox="0 0 7 5"><path d="M0.6 0.8 L3.5 3.8 L6.4 0.8" fill="none" stroke="#343a40" stroke-width="1.1"/></svg>
<div class="in ro" style="left:663.6px;top:430.5px;width:136.00px;height:17.20px;"><span style="position:absolute;left:7.5px;top:4.00px;font-size:8.6px;">自家用</span></div>
<svg class="a" style="left:790.6px;top:436.90000000000003px" width="7" height="5" viewBox="0 0 7 5"><path d="M0.6 0.8 L3.5 3.8 L6.4 0.8" fill="none" stroke="#343a40" stroke-width="1.1"/></svg>
<div class="in ro" style="left:802.4px;top:430.5px;width:190.00px;height:17.20px;"><span style="position:absolute;left:5px;top:4.00px;font-size:8.6px;">箱型</span></div>
<div class="lb" style="left:461px;top:452.4px;font-size:9px;letter-spacing:-0.4px;">車台番号</div>
<div class="lb" style="left:642.5px;top:452.4px;font-size:9px;letter-spacing:-0.4px;">型式</div>
<div class="lb" style="left:760px;top:452.4px;font-size:9px;letter-spacing:-0.4px;">型式指定</div>
<div class="lb" style="left:877.8px;top:452.4px;font-size:9px;letter-spacing:-0.4px;">類別区分</div>
<div class="in ro" style="left:460px;top:463.3px;width:179.60px;height:17.20px;"><span style="position:absolute;left:5px;top:3.00px;font-size:9.4px;">L275S-2222222</span></div>
<div class="in ro" style="left:642.3px;top:463.3px;width:114.90px;height:17.20px;"><span style="position:absolute;left:4.5px;top:3.00px;font-size:9.4px;">DBA-L275S</span></div>
<div class="in ro" style="left:759.4px;top:463.3px;width:115.40px;height:17.20px;"><span style="position:absolute;left:4.6px;top:3.00px;font-size:9.4px;">17978</span></div>
<div class="in ro" style="left:877.6px;top:463.3px;width:114.80px;height:17.20px;"><span style="position:absolute;left:4.4px;top:3.00px;font-size:9.4px;">0053</span></div>
<div class="lb" style="left:461px;top:485.2px;font-size:9px;letter-spacing:-0.4px;">車両メモ</div>
<div class="in ro" style="left:460px;top:496px;width:533.80px;height:24.00px;"><span style="position:absolute;left:5.5px;top:7.20px;font-size:9px;"></span></div>
<div class="a" style="left:46px;top:507px;width:967px;height:47px;background:#fff;border-top:1px solid #e9ebee;box-shadow:0 -1px 2px rgba(0,0,0,0.03)"></div>
<div class="lb" style="left:461px;top:517px;font-size:9px;letter-spacing:-0.4px;">ステータス</div>
<div class="in" style="left:461px;top:530.2px;width:83.20px;height:17.00px;"><span style="position:absolute;left:7.5px;top:3.90px;font-size:8.6px;">予約</span></div>
<svg class="a" style="left:535.2px;top:536.5px" width="7" height="5" viewBox="0 0 7 5"><path d="M0.6 0.8 L3.5 3.8 L6.4 0.8" fill="none" stroke="#343a40" stroke-width="1.1"/></svg>
<div class="a" style="left:558.2px;top:517.9px;width:40.5px;height:25.4px;background:#3478f6;border-radius:2.5px"></div>
<div class="a" style="left:558.2px;top:524.6px;width:40.5px;text-align:center;font-size:11px;line-height:1;color:#fff;white-space:nowrap;-webkit-text-stroke:0.2px #fff">保存</div>
<svg class="a" style="left:0;top:544px" width="10" height="10" viewBox="0 0 10 10"><path d="M0 0 A10 10 0 0 0 10 10 L0 10 Z" fill="#1d3540"/></svg>
<svg class="a" style="left:1011px;top:541px" width="13" height="13" viewBox="0 0 13 13"><path d="M13 0 A13 13 0 0 1 0 13 L13 13 Z" fill="#1d3540"/></svg>
</body></html>
